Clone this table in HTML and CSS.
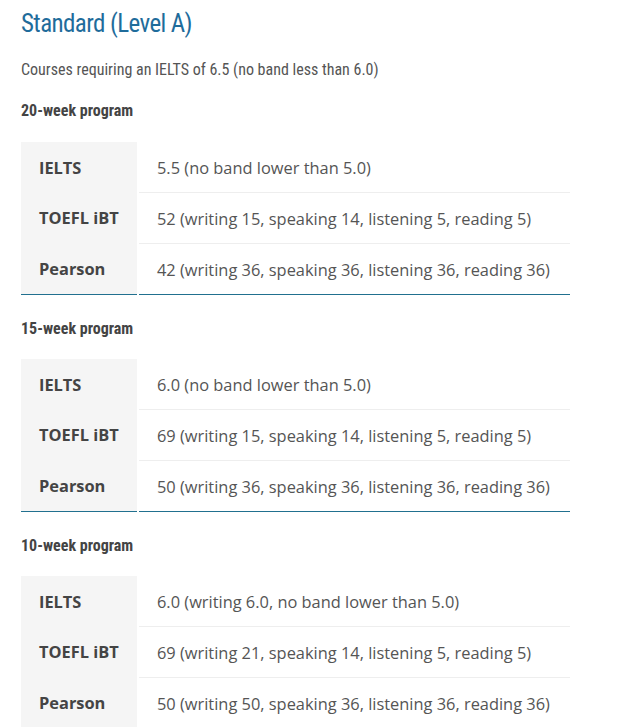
FILE: index.html
```html
<!DOCTYPE html>
<html>
<head>
<meta charset="utf-8">
<link rel="stylesheet" href="styles.css">
</head>
<body>
<div class="page">
  <h2 class="title">Standard (Level A)</h2>
  <p class="intro">Courses requiring an IELTS of 6.5 (no band less than 6.0)</p>

  <h4 class="program">20-week program</h4>
  <table class="scores first">
    <tr><th>IELTS</th><td>5.5 (no band lower than 5.0)</td></tr>
    <tr><th>TOEFL iBT</th><td>52 (writing 15, speaking 14, listening 5, reading 5)</td></tr>
    <tr><th>Pearson</th><td>42 (writing 36, speaking 36, listening 36, reading 36)</td></tr>
  </table>

  <h4 class="program">15-week program</h4>
  <table class="scores">
    <tr><th>IELTS</th><td>6.0 (no band lower than 5.0)</td></tr>
    <tr><th>TOEFL iBT</th><td>69 (writing 15, speaking 14, listening 5, reading 5)</td></tr>
    <tr><th>Pearson</th><td>50 (writing 36, speaking 36, listening 36, reading 36)</td></tr>
  </table>

  <h4 class="program">10-week program</h4>
  <table class="scores">
    <tr><th>IELTS</th><td>6.0 (writing 6.0, no band lower than 5.0)</td></tr>
    <tr><th>TOEFL iBT</th><td>69 (writing 21, speaking 14, listening 5, reading 5)</td></tr>
    <tr><th>Pearson</th><td>50 (writing 50, speaking 36, listening 36, reading 36)</td></tr>
  </table>
</div>
</body>
</html>
```

FILE: styles.css
```css
html, body {
  margin: 0;
  padding: 0;
  background: #ffffff;
}
.page {
  padding: 8px 0 0 21px;
  width: 549px;
}
.title {
  margin: 0;
  font-family: Roboto, "Liberation Sans Narrow", sans-serif;
  font-stretch: 75%;
  font-weight: 400;
  font-size: 25px;
  letter-spacing: -0.6px;
  line-height: 32px;
  color: #1f6c9b;
}
.intro {
  margin: 20px 0 0;
  font-family: Roboto, sans-serif;
  font-stretch: 75%;
  font-size: 16px;
  line-height: 20px;
  color: #555555;
}
.program {
  margin: 21px 0 0;
  font-family: Roboto, sans-serif;
  font-stretch: 75%;
  font-weight: 700;
  font-size: 16px;
  line-height: 20px;
  color: #444444;
}
.scores {
  margin: 20px 0 0 -2px;
  border-collapse: separate;
  border-spacing: 2px 0;
  width: 553px;
  font-family: "Open Sans", sans-serif;
}
.scores.first {
  margin-top: 21px;
}
.scores + .program {
  margin-top: 24px;
}
.scores th {
  width: 98px;
  padding: 0 0 0 18px;
  height: 50px;
  text-align: left;
  font-weight: 700;
  font-size: 16.4px;
  color: #444444;
  background: #f5f5f5;
}
.scores td {
  padding: 0 0 0 18px;
  height: 50px;
  font-size: 16.4px;
  color: #555555;
  border-top: 1px solid #eeeeee;
}
.scores tr:first-child td {
  border-top: none;
}
.scores tr:last-child th,
.scores tr:last-child td {
  border-bottom: 1px solid #21708f;
}
```
